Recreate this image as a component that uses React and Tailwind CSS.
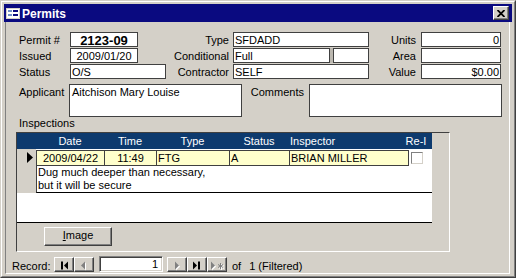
import React from 'react';

// Access-style "Permits" form window

function Label({ className = '', children }) {
  return <div className={`h-[15px] leading-[17px] whitespace-nowrap ${className}`}>{children}</div>;
}

function Field({ className = '', children }) {
  return (
    <div className={`h-[15px] border border-[#404040] bg-white px-[1px] leading-[15px] whitespace-nowrap ${className}`}>
      {children}
    </div>
  );
}

function FormIcon() {
  return (
    <svg width="14" height="11" viewBox="0 0 14 11">
      <rect x="0" y="0" width="14" height="11" fill="#d4d0c8" />
      <rect x="1" y="1" width="12" height="9" fill="#ffffff" />
      <rect x="2" y="2" width="4" height="2" fill="#6f8fc8" />
      <rect x="2" y="6" width="4" height="2" fill="#6f8fc8" />
      <rect x="7" y="2" width="5" height="2" fill="#0a0a80" />
      <rect x="7" y="6" width="5" height="2" fill="#0a0a80" />
    </svg>
  );
}

function NavBtn({ children }) {
  return (
    <div className="w-[20px] h-[15px] bg-[#d4d0c8] border border-t-white border-l-white border-r-[#404040] border-b-[#404040] shadow-[inset_-1px_-1px_0_#808080]">
      <svg width="18" height="13" viewBox="0 0 18 13">{children}</svg>
    </div>
  );
}

function Cell({ className = '', children }) {
  return (
    <div className={`h-[16px] border-t border-b border-l border-[#404040] bg-[#ffffcc] leading-[14px] whitespace-nowrap px-[1px] ${className}`}>
      {children}
    </div>
  );
}

export default function App() {
  return (
    <div className="w-[516px] h-[278px] bg-[#d4d0c8] font-['Liberation_Sans',Arial,sans-serif] text-[11px] text-black select-none">
      <div className="w-full h-full border border-t-[#d4d0c8] border-l-[#d4d0c8] border-r-[#404040] border-b-[#404040]">
        <div className="w-full h-full border border-t-white border-l-white border-r-[#808080] border-b-[#808080] p-[2px] flex flex-col">
          {/* title bar */}
          <div className="h-[18px] shrink-0 bg-[#0a0a80] flex items-center pl-[2px] pr-[3px]">
            <FormIcon />
            <span className="ml-[2px] text-white font-bold text-[12px] leading-[18px] pt-[1px]">Permits</span>
            <div className="ml-auto w-[16px] h-[14px] bg-[#d4d0c8] border border-t-white border-l-white border-r-[#404040] border-b-[#404040] shadow-[inset_-1px_-1px_0_#808080] flex items-center justify-center">
              <svg width="8" height="7" viewBox="0 0 8 7">
                <path d="M0.5 0 L7.5 7 M7.5 0 L0.5 7" stroke="#000" strokeWidth="1.8" />
              </svg>
            </div>
          </div>

          {/* client area */}
          <div className="flex-1 ml-[1px] mr-[2px] border-l border-r border-b border-l-[#808080] border-r-white border-b-white flex flex-col">
            <div className="h-[231px] pl-[10px] pt-[10px]">
              <div className="ml-[3px] grid grid-cols-[51px_96px_67px_136px_52px_80px] auto-rows-[15px] gap-y-[1px]">
                <Label>Permit #</Label>
                <div>
                  <Field className="w-[68px] text-center font-bold text-[13px]">2123-09</Field>
                </div>
                <Label className="text-right pr-[4px]">Type</Label>
                <Field>SFDADD</Field>
                <Label className="text-right pr-[5px]">Units</Label>
                <Field className="text-right">0</Field>

                <Label>Issued</Label>
                <div>
                  <Field className="w-[68px] text-center">2009/01/20</Field>
                </div>
                <Label className="text-right pr-[4px]">Conditional</Label>
                <div className="flex">
                  <Field className="w-[97px]">Full</Field>
                  <div className="w-[3px] h-[15px] bg-[#bcb8b0]" />
                  <Field className="w-[36px]" />
                </div>
                <Label className="text-right pr-[5px]">Area</Label>
                <Field />

                <Label>Status</Label>
                <Field className="w-[96px]">O/S</Field>
                <Label className="text-right pr-[4px]">Contractor</Label>
                <Field>SELF</Field>
                <Label className="text-right pr-[5px]">Value</Label>
                <Field className="text-right">$0.00</Field>
              </div>

              <div className="ml-[3px] mt-[5px] flex">
                <div className="w-[50px] leading-[14px] pt-[1px]">Applicant</div>
                <div className="w-[173px] h-[33px] border border-[#404040] bg-white px-[2px] leading-[14px]">
                  Aitchison Mary Louise
                </div>
                <div className="w-[67px] text-right pr-[5px] leading-[14px] pt-[1px]">Comments</div>
                <div className="w-[193px] h-[33px] border border-[#404040] bg-white" />
              </div>

              <div className="ml-[3px] h-[15px] leading-[13px]">Inspections</div>

              {/* subform */}
              <div className="w-[434px] h-[120px] border border-t-[#404040] border-l-[#404040] border-r-white border-b-white flex bg-[#d4d0c8]">
                <div className="w-[415px] flex flex-col">
                  <div className="h-[16px] bg-[#0d3a6e] text-white flex leading-[16px] whitespace-nowrap">
                    <div className="w-[19px]" />
                    <div className="w-[68px] text-center">Date</div>
                    <div className="w-[52px] text-center">Time</div>
                    <div className="w-[73px] text-center">Type</div>
                    <div className="w-[60px] text-center">Status</div>
                    <div className="w-[118px] pl-[1px]">Inspector</div>
                    <div className="w-[18px] flex justify-center">Re-I</div>
                  </div>

                  <div className="h-[44px] flex">
                    <div className="w-[19px] bg-[#d4d0c8] pl-[10px] pt-[3px]">
                      <svg width="6" height="11" viewBox="0 0 6 11">
                        <polygon points="0,0 6,5.5 0,11" fill="#000" />
                      </svg>
                    </div>
                    <div className="w-[396px] flex flex-col">
                      <div className="h-[17px] pt-[1px] bg-white flex items-start">
                        <Cell className="w-[68px] text-center">2009/04/22</Cell>
                        <Cell className="w-[52px] text-center">11:49</Cell>
                        <Cell className="w-[73px]">FTG</Cell>
                        <Cell className="w-[60px]">A</Cell>
                        <Cell className="w-[120px] border-r">BRIAN MILLER</Cell>
                        <div className="ml-[2px] mt-[2px] w-[12px] h-[12px] border border-t-[#808080] border-l-[#808080] border-r-[#d4d0c8] border-b-[#d4d0c8] bg-white" />
                      </div>
                      <div className="h-[27px] border-l border-b border-l-[#404040] border-b-black bg-white pl-[1px] leading-[13px]">
                        Dug much deeper than necessary,
                        <br />
                        but it will be secure
                      </div>
                    </div>
                  </div>

                  <div className="h-[30px] bg-white border-b border-black" />

                  <div className="h-[28px] pl-[27px] pt-[4px]">
                    <div className="w-[68px] h-[19px] bg-[#d4d0c8] border border-t-white border-l-white border-r-[#404040] border-b-[#404040] shadow-[inset_-1px_-1px_0_#808080] text-center leading-[15px]">
                      <span className="underline">I</span>mage
                    </div>
                  </div>
                </div>
              </div>
            </div>

            {/* navigation bar */}
            <div className="h-[20px] flex items-start pl-[6px]">
              <span className="w-[42px] mt-[7px] leading-[13px]">Record:</span>
              <div className="mt-[4px] flex">
                <NavBtn>
                  <rect x="6" y="3.5" width="2" height="8" fill="#000" />
                  <polygon points="13,3.5 9,7.5 13,11.5" fill="#000" />
                </NavBtn>
                <NavBtn>
                  <polygon points="11,4.5 7,8.5 11,12.5" fill="#fff" />
                  <polygon points="10,3.5 6,7.5 10,11.5" fill="#808080" />
                </NavBtn>
              </div>
              <div className="ml-[5px] mt-[3px] w-[64px] h-[16px] bg-white border border-t-[#808080] border-l-[#808080] border-r-white border-b-white shadow-[inset_1px_1px_0_#404040,inset_-1px_-1px_0_#d4d0c8] text-right pr-[4px] leading-[14px]">
                1
              </div>
              <div className="ml-[4px] mt-[4px] flex">
                <NavBtn>
                  <polygon points="8,4.5 12,8.5 8,12.5" fill="#fff" />
                  <polygon points="7,3.5 11,7.5 7,11.5" fill="#808080" />
                </NavBtn>
                <NavBtn>
                  <polygon points="5,3.5 9,7.5 5,11.5" fill="#000" />
                  <rect x="10" y="3.5" width="2" height="8" fill="#000" />
                </NavBtn>
                <NavBtn>
                  <polygon points="4,4.5 8,8.5 4,12.5" fill="#fff" />
                  <polygon points="3,3.5 7,7.5 3,11.5" fill="#808080" />
                  <path d="M12.5 5 V11 M10 6.5 L15 9.5 M15 6.5 L10 9.5" stroke="#fff" strokeWidth="1" transform="translate(1 1)" />
                  <path d="M12.5 5 V11 M10 6.5 L15 9.5 M15 6.5 L10 9.5" stroke="#808080" strokeWidth="1" />
                </NavBtn>
              </div>
              <span className="ml-[5px] mt-[7px] leading-[13px] whitespace-nowrap">
                of<span className="ml-[8px]">1 (Filtered)</span>
              </span>
            </div>
          </div>
        </div>
      </div>
    </div>
  );
}
